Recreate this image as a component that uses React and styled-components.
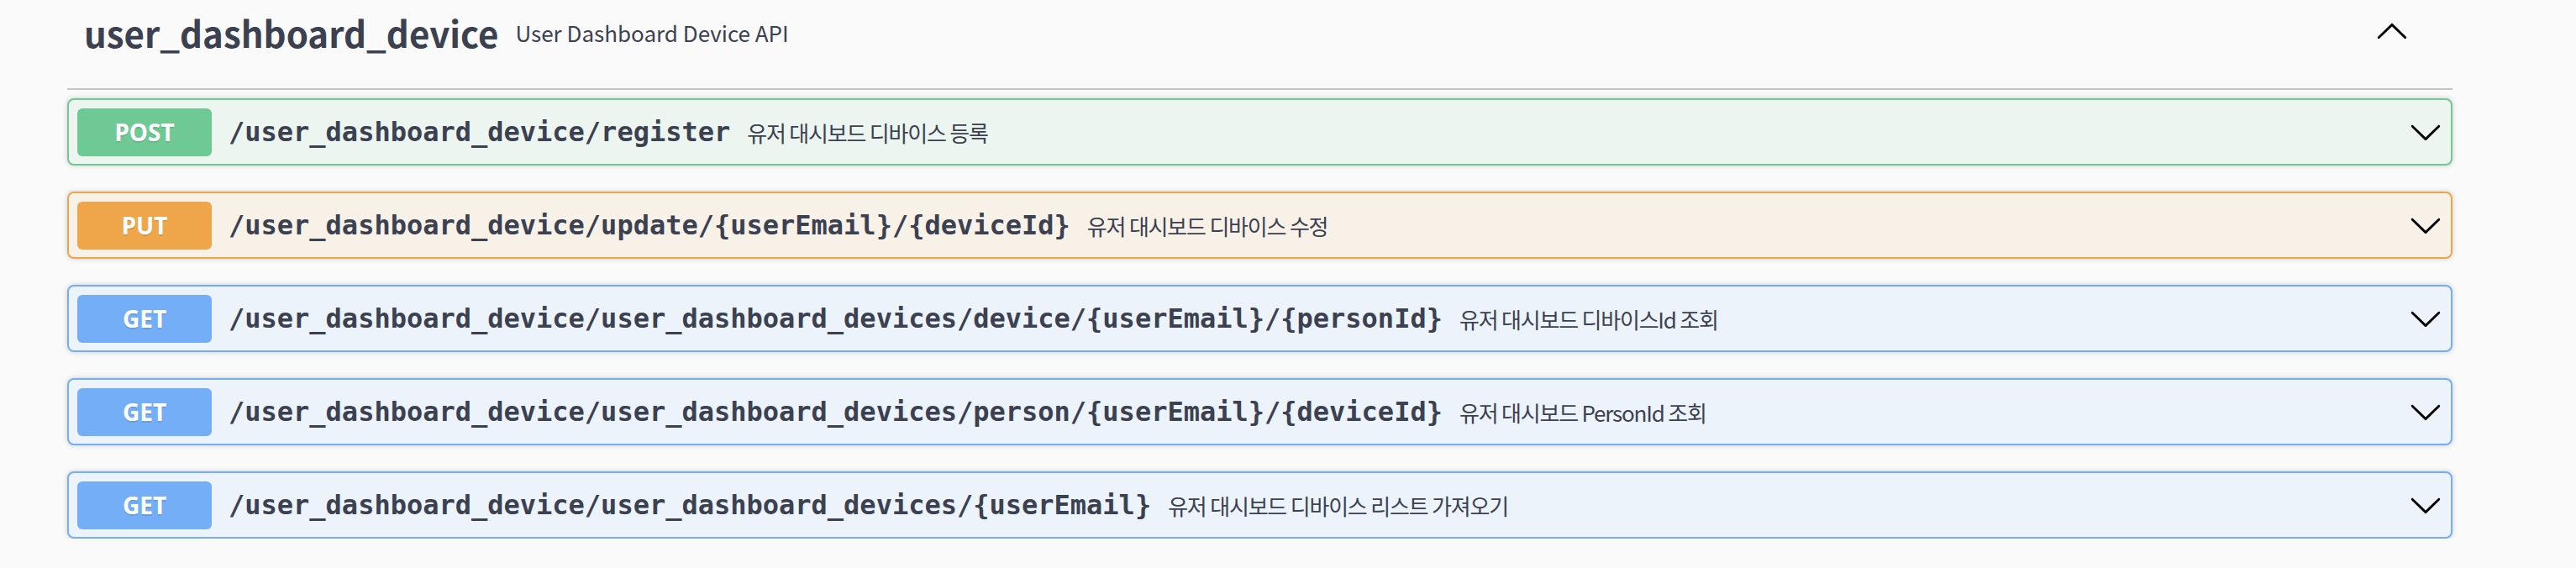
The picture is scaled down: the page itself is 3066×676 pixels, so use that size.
import React from "react";
import styled, { createGlobalStyle } from "styled-components";

const GlobalStyle = createGlobalStyle`
  html, body {
    margin: 0;
    padding: 0;
    background: #fafafa;
  }
  body {
    font-family: "Noto Sans CJK KR", "Noto Sans", sans-serif;
    color: #3b4151;
  }
`;

const methods = {
  POST: { badge: "#6fc995", border: "#6fc995", bg: "#ecf5ef" },
  PUT: { badge: "#efa64a", border: "#efa64a", bg: "#f8f1e8" },
  GET: { badge: "#74aef6", border: "#74aef6", bg: "#ecf3fb" },
};

const operations = [
  { method: "POST", path: "/user_dashboard_device/register", desc: "유저 대시보드 디바이스 등록" },
  { method: "PUT", path: "/user_dashboard_device/update/{userEmail}/{deviceId}", desc: "유저 대시보드 디바이스 수정" },
  { method: "GET", path: "/user_dashboard_device/user_dashboard_devices/device/{userEmail}/{personId}", desc: "유저 대시보드 디바이스Id 조회" },
  { method: "GET", path: "/user_dashboard_device/user_dashboard_devices/person/{userEmail}/{deviceId}", desc: "유저 대시보드 PersonId 조회" },
  { method: "GET", path: "/user_dashboard_device/user_dashboard_devices/{userEmail}", desc: "유저 대시보드 디바이스 리스트 가져오기" },
];

function Arrow({ up }) {
  return (
    <svg width="40" height="40" viewBox="0 0 20 20" style={up ? { transform: "rotate(180deg)" } : undefined}>
      <path
        fill="#000"
        d="M17.418 6.109c.272-.268.709-.268.979 0s.271.701 0 .969l-7.908 7.83c-.27.268-.707.268-.979 0l-7.908-7.83c-.27-.268-.27-.701 0-.969.271-.268.709-.268.979 0L10 13.25l7.418-7.141z"
      />
    </svg>
  );
}

function App() {
  return (
    <>
      <GlobalStyle />
      <Section>
        <Tag>
          <TagName>user_dashboard_device</TagName>
          <TagDesc>User Dashboard Device API</TagDesc>
          <ExpandButton>
            <Arrow up />
          </ExpandButton>
        </Tag>
        <List>
          {operations.map((op, i) => (
            <Block key={i} $method={op.method}>
              <Badge $method={op.method}>{op.method}</Badge>
              <Path>{op.path}</Path>
              <Desc>{op.desc}</Desc>
              <ExpandButton>
                <Arrow />
              </ExpandButton>
            </Block>
          ))}
        </List>
      </Section>
    </>
  );
}

export default App;

const Section = styled.div`
  width: 2839px;
  margin-left: 80px;
`;

const Tag = styled.div`
  box-sizing: border-box;
  height: 107px;
  display: flex;
  align-items: center;
  padding: 0 52px 29px 20px;
  border-bottom: 2px solid #c3c4c8;
  margin-bottom: 10px;
`;

const TagName = styled.span`
  font-size: 42px;
  font-weight: 700;
  color: #3b4151;
`;

const TagDesc = styled.small`
  flex: 1;
  font-size: 26px;
  font-weight: 400;
  padding: 0 20px;
  color: #3b4151;
`;

const ExpandButton = styled.div`
  display: flex;
  align-items: center;
  flex-shrink: 0;
`;

const List = styled.div`
  display: flex;
  flex-direction: column;
  gap: 31px;
`;

const Block = styled.div`
  box-sizing: border-box;
  height: 80px;
  display: flex;
  align-items: center;
  padding: 0 10px;
  border: 2px solid ${(p) => methods[p.$method].border};
  background: ${(p) => methods[p.$method].bg};
  border-radius: 8px;
  box-shadow: 0 0 6px rgba(0, 0, 0, 0.19);
`;

const Badge = styled.span`
  box-sizing: border-box;
  width: 160px;
  height: 57px;
  display: flex;
  align-items: center;
  justify-content: center;
  flex-shrink: 0;
  border-radius: 6px;
  background: ${(p) => methods[p.$method].badge};
  color: #fff;
  font-family: "Noto Sans", "Open Sans", sans-serif;
  font-size: 28px;
  font-weight: 700;
  text-shadow: 0 2px 0 rgba(0, 0, 0, 0.1);
`;

const Path = styled.span`
  padding: 0 20px;
  font-family: "DejaVu Sans Mono", monospace;
  font-size: 32px;
  font-weight: 700;
  color: #3b4151;
  white-space: nowrap;
`;

const Desc = styled.span`
  flex: 1;
  font-size: 26px;
  letter-spacing: -1.2px;
  color: #3b4151;
`;
